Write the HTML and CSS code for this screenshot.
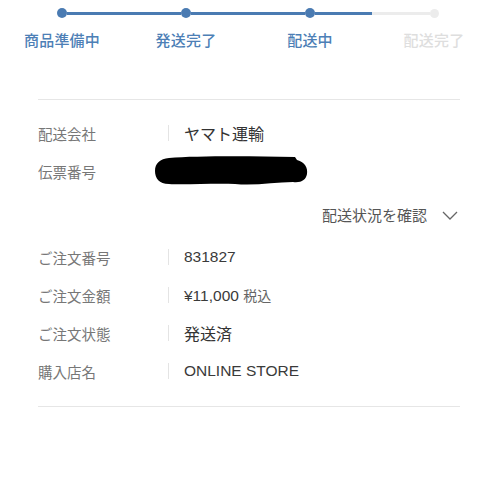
FILE: index.html
```html
<!DOCTYPE html>
<html lang="ja">
<head>
<meta charset="utf-8">
<link rel="stylesheet" href="styles.css">
</head>
<body>
<div class="stepper">
  <div class="step done">
    <div class="track"><span class="seg none"></span><span class="dot"></span><span class="seg"></span></div>
    <div class="label">商品準備中</div>
  </div>
  <div class="step done">
    <div class="track"><span class="seg"></span><span class="dot"></span><span class="seg"></span></div>
    <div class="label">発送完了</div>
  </div>
  <div class="step done">
    <div class="track"><span class="seg"></span><span class="dot"></span><span class="seg"></span></div>
    <div class="label">配送中</div>
  </div>
  <div class="step todo">
    <div class="track"><span class="seg"></span><span class="dot"></span><span class="seg none"></span></div>
    <div class="label">配送完了</div>
  </div>
</div>

<div class="details">
  <div class="row">
    <div class="key">配送会社</div>
    <div class="sep"></div>
    <div class="val">ヤマト運輸</div>
  </div>
  <div class="row redacted-row">
    <div class="key">伝票番号</div>
    <div class="sep"></div>
    <div class="val"></div>
    <svg class="blob" width="154" height="30" viewBox="0 0 154 30"><path d="M14 2 C40 0 90 0 140 1 L142 4 C150 6 153 12 152 18 C151 24 146 27 138 26 C120 26 100 30 80 28 C60 27 30 29 14 28 C4 28 0 22 0 15 C0 7 5 3 14 2 Z" fill="#000"/></svg>
  </div>
  <div class="link-row">
    <span class="link">配送状況を確認</span>
    <svg class="chev" width="16" height="9" viewBox="0 0 16 9"><path d="M1 1 L8 8 L15 1" fill="none" stroke="#666" stroke-width="1.3"/></svg>
  </div>
  <div class="row">
    <div class="key">ご注文番号</div>
    <div class="sep"></div>
    <div class="val num">831827</div>
  </div>
  <div class="row">
    <div class="key">ご注文金額</div>
    <div class="sep"></div>
    <div class="val num">¥11,000 <span class="tax">税込</span></div>
  </div>
  <div class="row">
    <div class="key">ご注文状態</div>
    <div class="sep"></div>
    <div class="val">発送済</div>
  </div>
  <div class="row">
    <div class="key">購入店名</div>
    <div class="sep"></div>
    <div class="val num">ONLINE STORE</div>
  </div>
</div>
</body>
</html>
```

FILE: styles.css
```css
html, body {
  margin: 0;
  padding: 0;
  background: #fff;
}
body {
  font-family: "Noto Sans CJK JP", "Noto Sans", sans-serif;
  width: 498px;
  height: 498px;
  overflow: hidden;
}
.stepper {
  display: grid;
  grid-template-columns: repeat(4, 124px);
  padding-top: 8px;
}
.step {
  display: flex;
  flex-direction: column;
  align-items: center;
}
.track {
  display: flex;
  align-items: center;
  width: 100%;
  height: 10px;
}
.seg {
  flex: 1;
  height: 3px;
  background: #4a7bb2;
}
.seg.none {
  background: transparent;
}
.dot {
  width: 10px;
  height: 10px;
  border-radius: 50%;
  background: #4a7bb2;
  flex: none;
}
.todo .seg, .todo .dot {
  background: #ececec;
}
.todo .seg.none {
  background: transparent;
}
.todo .dot {
  width: 9px;
  height: 9px;
}
.label {
  margin-top: 11px;
  font-size: 15px;
  font-weight: 500;
  line-height: 22px;
  color: #4d7fb6;
  letter-spacing: 0.2px;
}
.todo .label {
  color: #dedede;
}
.details {
  margin: 48px 38px 0;
  border-top: 1px solid #e6e6e6;
  border-bottom: 1px solid #e6e6e6;
  padding: 14px 0 16px;
}
.row {
  display: flex;
  align-items: center;
  height: 38px;
  position: relative;
}
.key {
  width: 130px;
  font-size: 14.5px;
  color: #777;
}
.sep {
  width: 1px;
  height: 16px;
  background: #e4e4e4;
}
.val {
  margin-left: 15px;
  font-size: 16px;
  color: #333;
}
.val.num {
  font-family: "Liberation Sans", "Noto Sans CJK JP", sans-serif;
  font-size: 15.5px;
  color: #3a3a3a;
}
.tax {
  font-family: "Noto Sans CJK JP", sans-serif;
  font-size: 14px;
  color: #666;
}
.blob {
  position: absolute;
  left: 117px;
  top: 4px;
}
.link-row {
  display: flex;
  align-items: center;
  justify-content: flex-end;
  height: 48px;
  padding-right: 2px;
}
.link {
  font-size: 15px;
  color: #555;
}
.chev {
  margin-left: 15px;
  margin-top: 2px;
}
```
